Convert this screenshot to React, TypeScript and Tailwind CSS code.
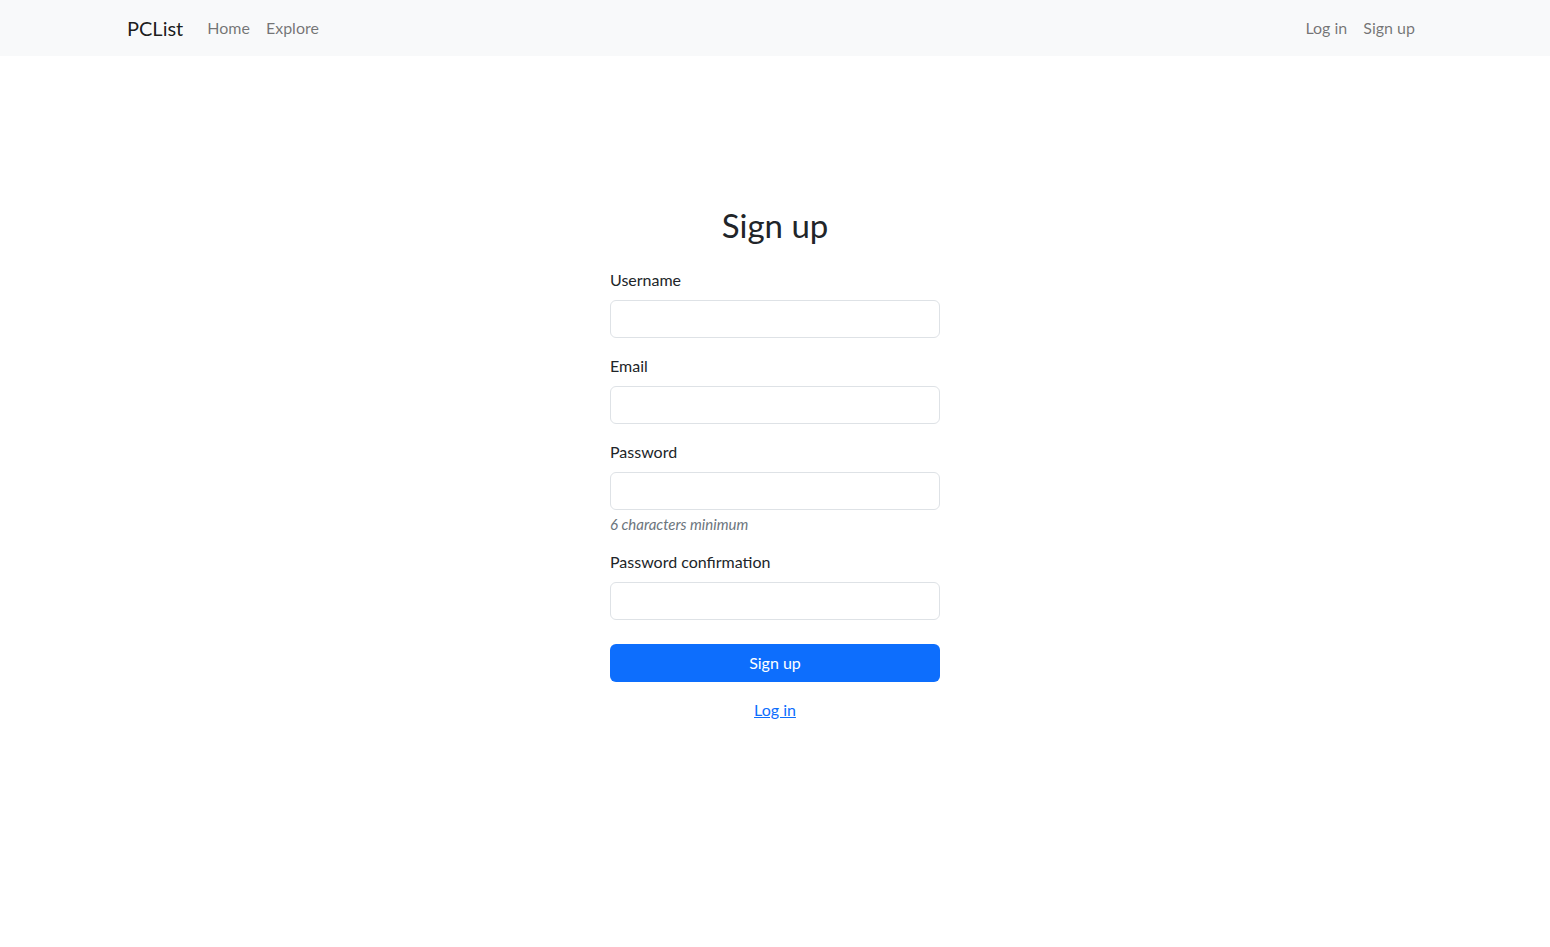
export default function App() {
  return (
    <div className="min-h-screen bg-white text-[#212529] font-['Lato',sans-serif]">
      <nav className="h-14 bg-[#f8f9fa]">
        <div className="mx-auto flex h-full w-[1320px] items-center px-3">
          <a className="mr-4 text-xl text-black/90" href="#">PCList</a>
          <div className="flex">
            <a className="px-2 text-base text-black/55" href="#">Home</a>
            <a className="px-2 text-base text-black/55" href="#">Explore</a>
          </div>
          <div className="ml-auto flex">
            <a className="px-2 text-base text-black/55" href="#">Log in</a>
            <a className="px-2 text-base text-black/55" href="#">Sign up</a>
          </div>
        </div>
      </nav>

      <main className="mx-auto w-[330px] pt-[150px]">
        <h2 className="mb-[22px] text-center text-[33px] leading-[1.2] font-normal">Sign up</h2>
        <form onSubmit={(e) => e.preventDefault()}>
          <Field label="Username" type="text" />
          <Field label="Email" type="email" />
          <Field label="Password" type="password" hint="6 characters minimum" />
          <Field label="Password confirmation" type="password" />
          <button
            type="submit"
            className="mt-2 h-[38px] w-full rounded-md bg-[#0d6efd] text-base text-white"
          >
            Sign up
          </button>
        </form>
        <div className="mt-4 text-center leading-6">
          <a href="#" className="text-[#0d6efd] underline">Log in</a>
        </div>
      </main>
    </div>
  );
}

function Field({ label, type, hint }: { label: string; type: string; hint?: string }) {
  return (
    <div className="mb-4">
      <label className="mb-2 block text-base leading-6">{label}</label>
      <input
        type={type}
        className="block h-[38px] w-full rounded-md border border-[#dee2e6] bg-white px-3 outline-none"
      />
      {hint && <div className="mt-1 text-[15px] italic leading-5 text-[#6c757d]">{hint}</div>}
    </div>
  );
}
